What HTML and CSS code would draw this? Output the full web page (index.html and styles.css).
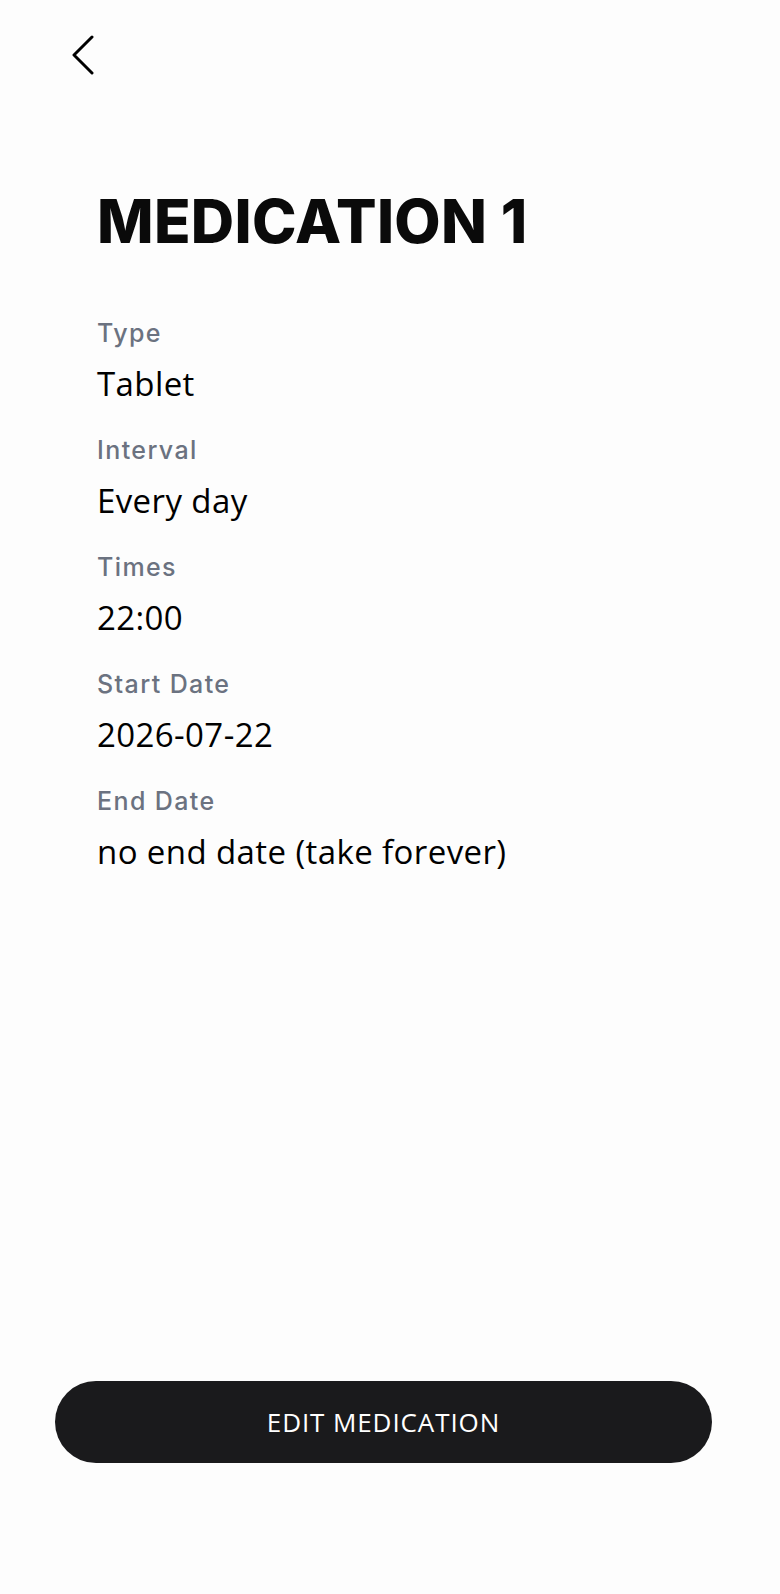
FILE: index.html
```html
<!DOCTYPE html>
<html>
<head>
<meta charset="utf-8">
<link rel="stylesheet" href="styles.css">
</head>
<body>
<div class="screen">
  <header class="topbar">
    <button class="back" aria-label="Back">
      <svg width="26" height="40" viewBox="0 0 26 40"><path d="M22 2 L4 20 L22 38" fill="none" stroke="#000" stroke-width="3" stroke-linecap="round" stroke-linejoin="round"/></svg>
    </button>
  </header>
  <main class="content">
    <h1 class="title">MEDICATION 1</h1>
    <dl class="fields">
      <div class="field"><dt>Type</dt><dd>Tablet</dd></div>
      <div class="field"><dt>Interval</dt><dd>Every day</dd></div>
      <div class="field"><dt>Times</dt><dd>22:00</dd></div>
      <div class="field"><dt>Start Date</dt><dd>2026-07-22</dd></div>
      <div class="field"><dt>End Date</dt><dd>no end date (take forever)</dd></div>
    </dl>
  </main>
  <footer class="actions">
    <button class="edit">EDIT MEDICATION</button>
  </footer>
</div>
</body>
</html>
```
FILE: styles.css
```css
html, body { margin: 0; padding: 0; background: #fdfdfd; }
body { font-family: Inter, "Noto Sans", sans-serif; color: #000; }
.screen { width: 780px; height: 1594px; display: flex; flex-direction: column; box-sizing: border-box; }
.topbar { padding: 35px 0 0 70px; height: 75px; box-sizing: border-box; }
.back { background: none; border: 0; padding: 0; margin: 0; display: block; cursor: pointer; }
.content { padding: 106px 0 0 97px; flex: 1; }
.title { margin: 0; font-family: Inter, sans-serif; font-weight: 800; font-size: 60px; line-height: 80px; letter-spacing: 0.3px; color: #0a0a0a; }
.fields { margin: 52px 0 0; padding: 0; display: flex; flex-direction: column; gap: 15px; }
.field { display: flex; flex-direction: column; }
.field dt { font-family: Inter, sans-serif; font-weight: 500; font-size: 25px; line-height: 40px; letter-spacing: 1.4px; color: #6b7280; }
.field dd { margin: 0; font-family: "Open Sans", sans-serif; font-size: 33px; line-height: 62px; letter-spacing: 0.4px; color: #000; }
.actions { padding: 0 68px 131px 55px; }
.edit { width: 657px; height: 82px; border: 0; border-radius: 41px; background: #1a1a1c; color: #fff; font-family: "Open Sans", sans-serif; font-size: 26px; letter-spacing: 0.9px; display: block; }
```
